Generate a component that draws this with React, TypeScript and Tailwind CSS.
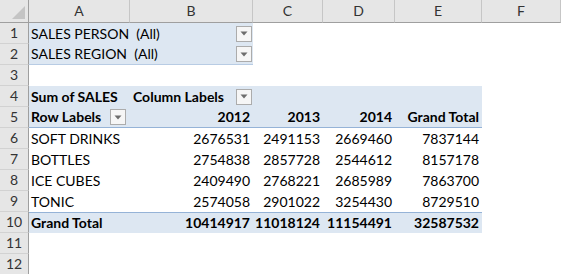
import React from "react";

const font = { fontFamily: "Lato, 'Open Sans', sans-serif" };

function Drop() {
  return (
    <div className="w-[16px] h-[16px] border border-[#acacac] bg-[#f6f6f6] flex items-center justify-center shrink-0">
      <svg width="8" height="5" viewBox="0 0 8 5">
        <path d="M0.5 0.5 L7.5 0.5 L4 4.5 Z" fill="#6d6d6d" />
      </svg>
    </div>
  );
}

const cols = ["A", "B", "C", "D", "E", "F"];

function RowHead({ n }: { n: number }) {
  return (
    <div className="bg-[#e6e6e6] border-r border-r-[#9f9f9f] border-b border-b-[#d2d2d2] flex items-center justify-center text-[#333]">
      {n}
    </div>
  );
}

const dataRows = [
  ["SOFT DRINKS", "2676531", "2491153", "2669460", "7837144"],
  ["BOTTLES", "2754838", "2857728", "2544612", "8157178"],
  ["ICE CUBES", "2409490", "2768221", "2685989", "7863700"],
  ["TONIC", "2574058", "2901022", "3254430", "8729510"],
];

export default function App() {
  return (
    <div className="w-[561px] h-[274px] overflow-hidden bg-white text-black" style={font}>
      <div className="grid grid-cols-[29px_101px_123px_70px_72px_87px_1fr] grid-rows-[23px_repeat(12,21px)] text-[14px] leading-none">
        {/* header row */}
        <div className="bg-[#e6e6e6] border-r border-r-[#9f9f9f] border-b border-b-[#9f9f9f] relative">
          <svg className="absolute right-[3px] bottom-[3px]" width="13" height="13" viewBox="0 0 13 13">
            <path d="M13 0 L13 13 L0 13 Z" fill="#c4c4c4" />
          </svg>
        </div>
        {cols.map((c) => (
          <div
            key={c}
            className="bg-[#e6e6e6] border-r border-r-[#c6c6c6] border-b border-b-[#9f9f9f] flex items-center justify-center text-[#333]"
          >
            {c}
          </div>
        ))}

        {/* row 1 */}
        <RowHead n={1} />
        <div className="col-span-2 bg-[#dde7f2] flex items-center pl-[2px] pr-[1px] justify-between">
          <span className="whitespace-pre">SALES PERSON  (All)</span>
          <Drop />
        </div>
        <div className="col-span-4" />

        {/* row 2 */}
        <RowHead n={2} />
        <div className="col-span-2 bg-[#dde7f2] border-b border-b-[#b8cce4] flex items-center pl-[2px] pr-[1px] justify-between">
          <span className="whitespace-pre">SALES REGION  (All)</span>
          <Drop />
        </div>
        <div className="col-span-4" />

        {/* row 3 */}
        <RowHead n={3} />
        <div className="col-span-6" />

        {/* row 4 */}
        <RowHead n={4} />
        <div className="bg-[#dde7f2] flex items-center pl-[2px] font-bold whitespace-nowrap">Sum of SALES</div>
        <div className="bg-[#dde7f2] flex items-center pl-[3px] pr-[1px] justify-between font-bold">
          <span className="whitespace-nowrap">Column Labels</span>
          <Drop />
        </div>
        <div className="col-span-3 bg-[#dde7f2]" />
        <div />

        {/* row 5 */}
        <RowHead n={5} />
        <div className="bg-[#dde7f2] border-b border-b-[#95b3d7] flex items-center pl-[2px] gap-[9px] font-bold">
          <span className="whitespace-nowrap">Row Labels</span>
          <Drop />
        </div>
        {["2012", "2013", "2014", "Grand Total"].map((t) => (
          <div
            key={t}
            className="bg-[#dde7f2] border-b border-b-[#95b3d7] flex items-center justify-end pr-[3px] font-bold whitespace-nowrap"
          >
            {t}
          </div>
        ))}
        <div />

        {/* data rows */}
        {dataRows.map((r, i) => (
          <React.Fragment key={r[0]}>
            <RowHead n={6 + i} />
            <div className="flex items-center pl-[2px] whitespace-nowrap">{r[0]}</div>
            {r.slice(1).map((v, j) => (
              <div key={j} className="flex items-center justify-end pr-[3px]">
                {v}
              </div>
            ))}
            <div />
          </React.Fragment>
        ))}

        {/* row 10 */}
        <RowHead n={10} />
        <div className="bg-[#dde7f2] border-t border-t-[#95b3d7] flex items-center pl-[2px] font-bold whitespace-nowrap">
          Grand Total
        </div>
        {["10414917", "11018124", "11154491", "32587532"].map((v) => (
          <div
            key={v}
            className="bg-[#dde7f2] border-t border-t-[#95b3d7] flex items-center justify-end pr-[3px] font-bold"
          >
            {v}
          </div>
        ))}
        <div />

        <RowHead n={11} />
        <div className="col-span-6" />
        <RowHead n={12} />
        <div className="col-span-6" />
      </div>
    </div>
  );
}
